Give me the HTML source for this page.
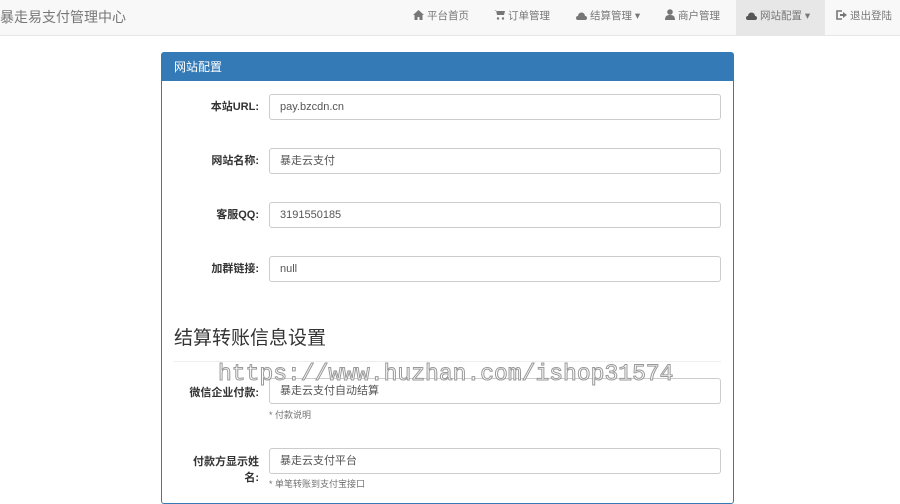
<!DOCTYPE html>
<html><head><meta charset="utf-8"><style>
body{margin:0;width:900px;height:491px;overflow:hidden;background:#fff;font-family:"Liberation Sans","Noto Sans CJK SC",sans-serif;font-size:11px;color:#333;position:relative}
.nav{position:absolute;left:0;top:0;width:900px;height:35px;background:#f8f8f8;border-bottom:1px solid #e7e7e7}
.brand{position:absolute;left:0;top:7px;font-size:14px;color:#777}
.item{position:absolute;top:0;height:35px;line-height:33px;color:#777;font-size:10.5px}
.item svg{vertical-align:-1px;margin-right:3px}
.active{background:#e7e7e7}
.panel{position:absolute;left:161px;top:52px;width:571px;height:450px;border:1px solid #337ab7;border-radius:3px}
.ph{background:#337ab7;color:#fff;height:28px;line-height:28px;padding-left:12px;font-size:12px}
.lbl{position:absolute;width:97px;text-align:right;font-weight:bold;font-size:11px;left:0}
.inp{position:absolute;left:107px;width:440px;height:24px;border:1px solid #ccc;border-radius:3px;line-height:24px;padding-left:10px;box-sizing:content-box;font-size:11px;color:#555}
.help{position:absolute;left:107px;font-size:9px;color:#737373}
h3{position:absolute;left:12px;top:270px;margin:0;font-weight:normal;font-size:19px}
.hr{position:absolute;left:12px;width:547px;top:308px;border-top:1px solid #eee}
.wm{position:absolute;left:218px;top:361px;font-family:"Liberation Mono",monospace;font-size:23px;color:#fff;-webkit-text-stroke:1px #999}
</style></head><body>
<div class="nav">
<div class="brand">暴走易支付管理中心</div>
<div class="item" style="left:413px"><svg width="11" height="10" viewBox="0 0 11 10"><path d="M5.5 0L0 5h1.5v5h3V7h2v3h3V5H11z" fill="#777"/></svg>平台首页</div>
<div class="item" style="left:494px"><svg width="11" height="10" viewBox="0 0 11 10"><path d="M0 0h2l1 5h7l1-4H3" fill="#777"/><circle cx="4" cy="8.5" r="1.2" fill="#777"/><circle cx="9" cy="8.5" r="1.2" fill="#777"/></svg>订单管理</div>
<div class="item" style="left:576px"><svg width="11" height="8" viewBox="0 0 11 8"><path d="M2 8a2 2 0 0 1 0-4a3.5 3.5 0 0 1 7 0a2 2 0 0 1 0 4z" fill="#777"/></svg>结算管理 ▾</div>
<div class="item" style="left:665px"><svg width="10" height="11" viewBox="0 0 10 11"><circle cx="5" cy="3" r="2.8" fill="#777"/><path d="M0 11c0-4 2-5 5-5s5 1 5 5z" fill="#777"/></svg>商户管理</div>
<div class="item active" style="left:736px;width:89px;padding-left:10px;box-sizing:border-box"><svg width="11" height="8" viewBox="0 0 11 8"><path d="M2 8a2 2 0 0 1 0-4a3.5 3.5 0 0 1 7 0a2 2 0 0 1 0 4z" fill="#555"/></svg>网站配置 ▾</div>
<div class="item" style="left:836px"><svg width="11" height="10" viewBox="0 0 11 10"><path d="M6 1H1v8h5" fill="none" stroke="#777" stroke-width="1.6"/><path d="M4 4h3V2l4 3-4 3V6H4z" fill="#777"/></svg>退出登陆</div>
</div>
<div class="panel">
<div class="ph">网站配置</div>
<div class="lbl" style="top:45px">本站URL:</div><div class="inp" style="top:41px">pay.bzcdn.cn</div>
<div class="lbl" style="top:99px">网站名称:</div><div class="inp" style="top:95px">暴走云支付</div>
<div class="lbl" style="top:153px">客服QQ:</div><div class="inp" style="top:149px">3191550185</div>
<div class="lbl" style="top:207px">加群链接:</div><div class="inp" style="top:203px">null</div>
<h3>结算转账信息设置</h3><div class="hr"></div>
<div class="lbl" style="top:331px">微信企业付款:</div><div class="inp" style="top:325px">暴走云支付自动结算</div>
<div class="help" style="top:355px">* 付款说明</div>
<div class="lbl" style="top:401px;line-height:16px">付款方显示姓<br>名:</div><div class="inp" style="top:395px">暴走云支付平台</div>
<div class="help" style="top:424px">* 单笔转账到支付宝接口</div>
</div>
<div class="wm">https://www.huzhan.com/ishop31574</div>
</body></html>
